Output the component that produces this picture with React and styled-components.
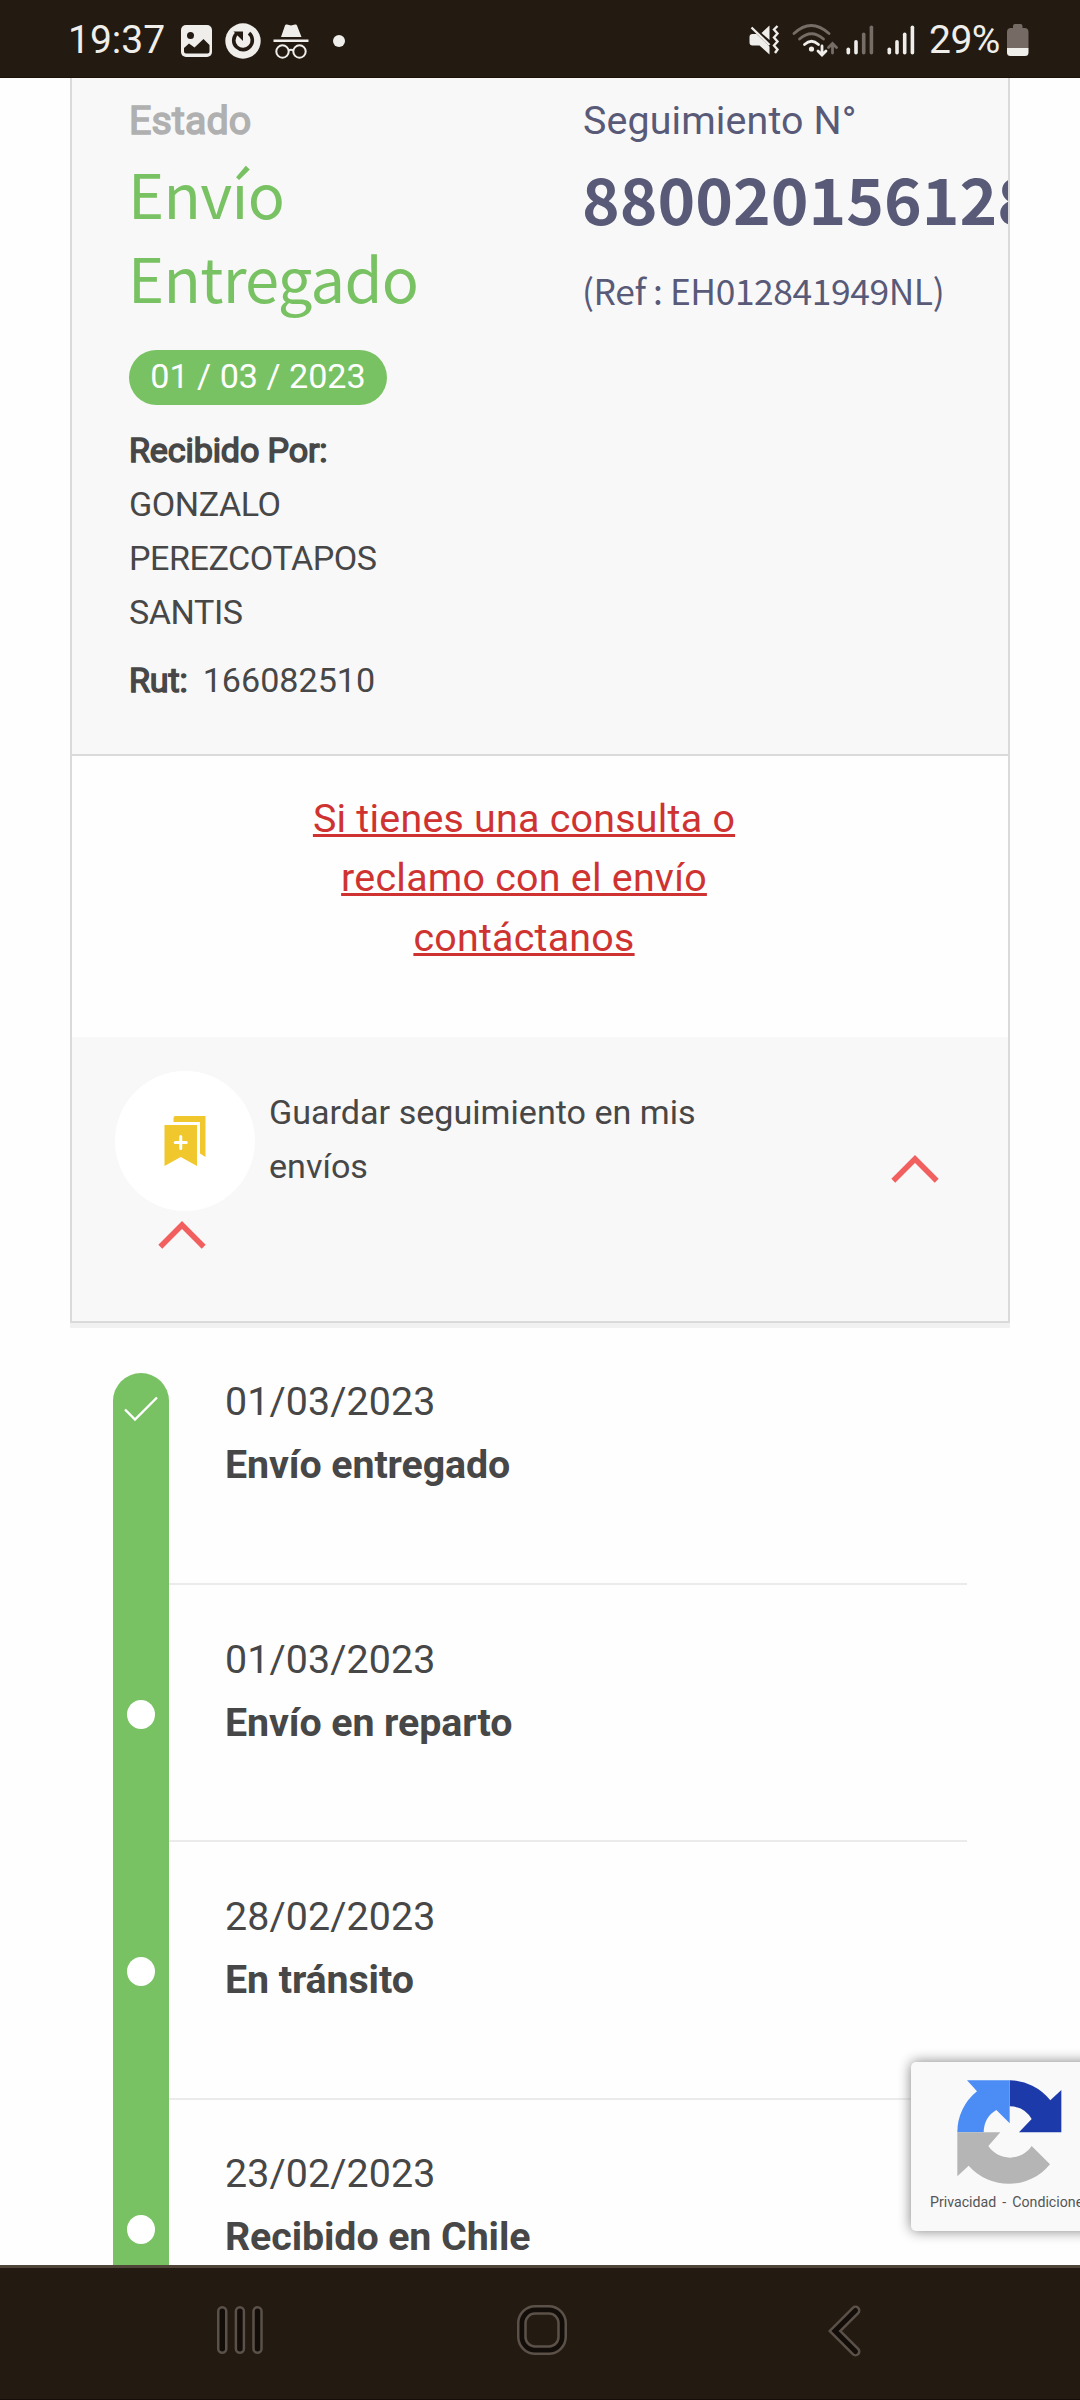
import React from 'react';
import styled, { createGlobalStyle } from 'styled-components';

const events = [
  { id: 1, date: '01/03/2023', title: 'Envío entregado', done: true },
  { id: 2, date: '01/03/2023', title: 'Envío en reparto' },
  { id: 3, date: '28/02/2023', title: 'En tránsito' },
  { id: 4, date: '23/02/2023', title: 'Recibido en Chile' },
];

const ImageIcon = () => (
  <svg width='31' height='32' viewBox='0 0 31 32'>
    <rect width='31' height='32' rx='5' fill='#efeeeb' />
    <circle cx='9.5' cy='10.5' r='3.5' fill='#231a12' />
    <path
      d='M3 23l5-4.5 5.5 4L22.5 14l6 6v6.5q0 2-2 2h-21.5q-2 0-2-2z'
      fill='#231a12'
    />
  </svg>
);

const UpdateIcon = () => (
  <svg width='36' height='36' viewBox='0 0 36 36'>
    <circle cx='18' cy='18' r='17.7' fill='#efeeeb' />
    <path
      d='M24 10.2a9.3 9.3 0 1 1-12.5 0.5'
      fill='none'
      stroke='#231a12'
      strokeWidth='3.6'
    />
    <path d='M8.5 8.5h9.5v9.5z' fill='#231a12' />
  </svg>
);

const IncognitoIcon = () => (
  <svg width='36' height='36' viewBox='0 0 36 36' fill='#efeeeb'>
    <path d='M8 14L12 2.5q.5-1.500 2-1l4 1 4-1q1.500-.5 2 1L28.500 14z' />
    <rect x='0.5' y='16.5' width='35' height='2.5' />
    <g fill='none' stroke='#efeeeb' strokeWidth='2'>
      <circle cx='9.5' cy='28.5' r='6.2' />
      <circle cx='26.5' cy='28.5' r='6.2' />
      <path d='M15.5 27.5q2.5-1.4 5 0' />
    </g>
  </svg>
);

const MuteIcon = () => (
  <svg width='31' height='30' viewBox='0 0 31 30'>
    <path
      d='M0.500 12q0-3 3-3h4l13 12.500v8l-10-9h-7q-3 0-3-3zM12.500 8l8-7.500v14.500z'
      fill='#efeeeb'
    />
    <path d='M2.500 2.500L20.500 20' stroke='#efeeeb' strokeWidth='2.4' />
    <path
      d='M28.500 1l-3.500 3.500 3.500 4-3.500 4 3.500 4-3.500 4 3.500 4-2.500 3.500'
      fill='none'
      stroke='#efeeeb'
      strokeWidth='2.4'
    />
  </svg>
);

const WifiIcon = () => (
  <svg width='46' height='34' viewBox='0 0 46 34' fill='none'>
    <g strokeWidth='2.8' strokeLinecap='round'>
      <path d='M2 10.5q17-16 35 0' stroke='#756d66' />
      <path d='M7.5 16q12-10.5 24 0' stroke='#756d66' />
      <path d='M12.5 21.5q7-6.5 14 0' stroke='#efeeeb' />
      <path d='M30 23v8.5m-4-3.5l4 4 4-4' stroke='#efeeeb' />
      <path d='M40.5 30v-9m-4 3.5l4-4 4 4' stroke='#756d66' />
    </g>
    <circle cx='19.5' cy='26' r='2.6' fill='#efeeeb' />
  </svg>
);

const SignalIcon = ({ bars }) => (
  <svg width='28' height='30' viewBox='0 0 28 30'>
    {[7, 14.5, 22, 29].map((height, index) => (
      <rect
        key={height}
        x={0.5 + index * 7.7}
        y={29.5 - height}
        width='3.6'
        height={height}
        rx='1.8'
        fill={index < bars ? '#efeeeb' : '#756d66'}
      />
    ))}
  </svg>
);

const BatteryIcon = () => (
  <svg width='22' height='32' viewBox='0 0 22 32'>
    <path
      d='M6 4V2q0-2 2-2h5.5q2 0 2 2v2h2q4 0 4 4v16H0V8q0-4 4-4z'
      fill='#756b64'
    />
    <path d='M0 24h21.5v4.5q0 3.5-3.5 3.5H3.5Q0 32 0 28.5z' fill='#efeeeb' />
  </svg>
);

const BookmarksIcon = () => (
  <svg width='42' height='51' viewBox='0 0 42 51' fill='#f0c72c'>
    <path d='M9.5 6V2q0-2 2-2H41.5v41l-5.5-3.5V6z' />
    <path d='M.5 9h32.5v41l-16.25-9L.5 50z' />
    <path
      d='M16.75 20.5v12M11.2 26.5h11.1'
      stroke='#fff'
      strokeWidth='3'
      strokeLinecap='round'
    />
  </svg>
);

const ChevronUp = () => (
  <svg width='48' height='28' viewBox='0 0 48 28' fill='none'>
    <path d='M2.3 25.7L24 4l21.7 21.7' stroke='#f25f5f' strokeWidth='5.5' />
  </svg>
);

const CheckIcon = () => (
  <svg width='34' height='26' viewBox='0 0 34 26' fill='none'>
    <path d='M1 13.5l10 10L33 1.5' stroke='#fff' strokeWidth='2.4' />
  </svg>
);

const CaptchaLogo = () => (
  <svg width='108' height='110' viewBox='285 175 324 330'>
    <path
      d='M449 182A156 156 0 0 1 571 242L604 211V338H477L515 298A78 78 0 0 0 449 260z'
      fill='#1c3aa9'
    />
    <path
      d='M449 182H321L351 215A156 156 0 0 0 292 338H371Q372 292 409 271L449 311z'
      fill='#4c8df5'
    />
    <path
      d='M292 338H421L385 379A78 78 0 0 0 515 379L570 434A160 160 0 0 1 326 438L292 470z'
      fill='#b5b5b5'
    />
  </svg>
);

const RecentsIcon = () => (
  <svg width='46' height='50' viewBox='0 0 46 50'>
    {[1.25, 18.9, 36.5].map((x) => (
      <rect
        key={x}
        x={x}
        y='2.25'
        width='8'
        height='45.5'
        rx='4'
        fill='#120d09'
        stroke='#5b5148'
        strokeWidth='2.5'
      />
    ))}
  </svg>
);

const HomeIcon = () => (
  <svg width='50' height='50' viewBox='0 0 50 50' stroke='#5b5148' strokeWidth='2.5'>
    <rect x='1.25' y='1.25' width='47.5' height='47.5' rx='17' fill='#120d09' />
    <rect x='8.5' y='8.5' width='33' height='33' rx='9.5' fill='#231a12' />
  </svg>
);

const BackIcon = () => (
  <svg width='34' height='52' viewBox='0 0 34 52' fill='none' strokeLinecap='round'>
    <path d='M27.5 5.5L7 26l20.5 20.5' stroke='#5b5148' strokeWidth='10' />
    <path d='M27.5 5.5L7 26l20.5 20.5' stroke='#120d09' strokeWidth='5' />
  </svg>
);

const StatusBar = () => (
  <StatusWrapper>
    <Time>19:37</Time>
    <LeftIcons>
      <ImageIcon />
      <UpdateIcon />
      <IncognitoIcon />
      <MoreDot />
    </LeftIcons>
    <RightIcons>
      <MuteIcon />
      <WifiIcon />
      <SignalGroup>
        <SignalIcon bars={2} />
        <SignalIcon bars={4} />
      </SignalGroup>
      <Percent>29%</Percent>
      <BatteryIcon />
    </RightIcons>
  </StatusWrapper>
);

const Summary = () => (
  <SummaryWrapper>
    <StatusColumn>
      <Label $muted>Estado</Label>
      <StatusTitle>Envío Entregado</StatusTitle>
      <DatePill>01 / 03 / 2023</DatePill>
      <Receiver>
        <dt>Recibido Por:</dt>
        <dd>GONZALO PEREZCOTAPOS SANTIS</dd>
      </Receiver>
      <Rut>
        <dt>Rut:</dt>
        <dd>166082510</dd>
      </Rut>
    </StatusColumn>
    <TrackingColumn>
      <Label>Seguimiento N°</Label>
      <TrackingNumber>880020156128</TrackingNumber>
      <Reference>(Ref : EH012841949NL)</Reference>
    </TrackingColumn>
  </SummaryWrapper>
);

const SavePanel = () => (
  <SaveWrapper>
    <SaveRow>
      <IconCircle>
        <BookmarksIcon />
      </IconCircle>
      <SaveText>Guardar seguimiento en mis envíos</SaveText>
      <RowToggle>
        <ChevronUp />
      </RowToggle>
    </SaveRow>
    <PanelToggle>
      <ChevronUp />
    </PanelToggle>
  </SaveWrapper>
);

const Timeline = () => (
  <TimelineList>
    {events.map((event) => (
      <TimelineItem key={event.id}>
        <Rail $first={event.done}>{event.done ? <CheckIcon /> : <Dot />}</Rail>
        <EventBody $first={event.done}>
          <EventDate>{event.date}</EventDate>
          <EventTitle>{event.title}</EventTitle>
        </EventBody>
      </TimelineItem>
    ))}
  </TimelineList>
);

const App = () => {
  return (
    <>
      <GlobalStyle />
      <Screen>
        <StatusBar />
        <Page>
          <Card>
            <Summary />
            <Contact>
              <a href='#contacto'>Si tienes una consulta o reclamo con el envío contáctanos</a>
            </Contact>
            <SavePanel />
          </Card>
          <Timeline />
          <CaptchaBadge>
            <CaptchaLogo />
            <CaptchaLinks>
              <span>Privacidad</span>
              <span>-</span>
              <span>Condiciones</span>
            </CaptchaLinks>
          </CaptchaBadge>
        </Page>
        <NavBar>
          <RecentsIcon />
          <HomeIcon />
          <BackIcon />
        </NavBar>
      </Screen>
    </>
  );
};

const GlobalStyle = createGlobalStyle`
  * {
    box-sizing: border-box;
    margin: 0;
    padding: 0;
  }

  body {
    font-family: Roboto, sans-serif;
    background: #fefefe;
    color: #474747;
  }

  svg {
    display: block;
    flex-shrink: 0;
  }
`;

const Screen = styled.div`
  width: 1080px;
  height: 2400px;
  display: flex;
  flex-direction: column;
  overflow: hidden;
`;

const StatusWrapper = styled.header`
  height: 78px;
  flex-shrink: 0;
  display: flex;
  align-items: center;
  padding: 2px 51px 0 68px;
  background: #231a12;
  border-bottom: 1px solid #1a110b;
  color: #efeeeb;
  font-size: 39px;
`;

const Time = styled.span`
  width: 113px;
`;

const LeftIcons = styled.div`
  display: flex;
  align-items: center;
  gap: 12.5px;
  padding-top: 2px;
`;

const MoreDot = styled.span`
  width: 12px;
  height: 12px;
  margin-left: 11px;
  border-radius: 50%;
  background: #efeeeb;
`;

const RightIcons = styled.div`
  display: flex;
  align-items: center;
  gap: 12px;
  margin-left: auto;
`;

const SignalGroup = styled.div`
  display: flex;
  gap: 13px;
  margin-left: -4px;
`;

const Percent = styled.span`
  width: 78px;
  margin: 0 -12px 0 2px;
  white-space: nowrap;
  letter-spacing: -0.5px;
`;

const Page = styled.main`
  position: relative;
  height: 2187px;
  flex-shrink: 0;
  overflow: hidden;
  background: #fefefe;
`;

const Card = styled.section`
  margin: 0 70px;
  border: 2px solid #dadada;
  border-top: none;
  box-shadow: 0 5px 0 #f1f1f1;
`;

const SummaryWrapper = styled.div`
  display: grid;
  grid-template-columns: 454px 1fr;
  padding: 14px 0 47px 57px;
  background: #f8f8f8;
  border-bottom: 2px solid #dadada;
  overflow: hidden;
`;

const StatusColumn = styled.div`
  width: 300px;
`;

const TrackingColumn = styled.div`
  min-width: 0;
  color: #585a78;
  white-space: nowrap;
`;

const Label = styled.p`
  font-size: 39.375px;
  line-height: 58px;
  letter-spacing: 0.12px;
  color: ${({ $muted }) => ($muted ? '#b0b0b0' : 'inherit')};
  -webkit-text-stroke: ${({ $muted }) => ($muted ? '1.6px #b0b0b0' : '0')};
`;

const StatusTitle = styled.h1`
  padding-top: 1px;
  margin: 0 0 -1px -1px;
  font-family: 'Noto Sans CJK SC', sans-serif;
  font-size: 61.4px;
  font-weight: 400;
  line-height: 84px;
  letter-spacing: -0.7px;
  color: #79c263;
`;

const DatePill = styled.p`
  width: 258px;
  height: 55px;
  margin-top: 32px;
  border-radius: 28px;
  background: #79c263;
  color: #fff;
  font-size: 34.125px;
  line-height: 53px;
  text-align: center;
  white-space: nowrap;
`;

const Receiver = styled.dl`
  margin-top: 18px;
  font-size: 34.125px;
  line-height: 54px;

  dt {
    letter-spacing: -0.15px;
    -webkit-text-stroke: 1.5px #474747;
  }

  dd {
    letter-spacing: -0.45px;
  }
`;

const Rut = styled(Receiver)`
  display: flex;
  gap: 15px;
  margin-top: 14px;

  dd {
    letter-spacing: 0;
  }
`;

const TrackingNumber = styled.p`
  margin: 5px 0 0 -1px;
  font-family: 'Noto Sans CJK SC', sans-serif;
  font-size: 64px;
  font-weight: 700;
  line-height: 84px;
`;

const Reference = styled.p`
  margin: 21px 0 0 -1px;
  font-family: 'Noto Sans CJK SC', sans-serif;
  font-size: 35.4px;
  font-weight: 400;
  line-height: 60px;
  letter-spacing: -0.42px;
`;

const Contact = styled.div`
  display: flex;
  justify-content: center;
  height: 281px;
  padding: 33px 32px 0 0;
  text-align: center;

  a {
    width: 460px;
    color: #cf3331;
    font-size: 39.375px;
    line-height: 59.4px;
    letter-spacing: 0.25px;
    text-decoration: underline 3px;
    text-underline-offset: 2px;
    text-decoration-skip-ink: none;
  }
`;

const SaveWrapper = styled.div`
  height: 284px;
  padding: 34px 69px 0 43px;
  background: #f8f8f8;
`;

const SaveRow = styled.div`
  display: flex;
  align-items: flex-start;
`;

const IconCircle = styled.div`
  width: 140px;
  height: 140px;
  display: flex;
  align-items: center;
  justify-content: center;
  border-radius: 50%;
  background: #fff;
`;

const SaveText = styled.p`
  width: 460px;
  margin: 14px 0 0 14px;
  font-size: 34.125px;
  line-height: 54px;
`;

const RowToggle = styled.div`
  margin: 84px 0 0 auto;
`;

const PanelToggle = styled.div`
  margin: 10px 0 0 43px;
`;

const TimelineList = styled.ul`
  margin: 50px 113px 0;
  list-style: none;
`;

const TimelineItem = styled.li`
  display: grid;
  grid-template-columns: 56px 798px;
`;

const Rail = styled.div`
  display: flex;
  flex-direction: column;
  align-items: center;
  padding-top: ${({ $first }) => ($first ? '23px' : '115px')};
  border-radius: ${({ $first }) => ($first ? '28px 28px 0 0' : '0')};
  background: #79c263;
`;

const Dot = styled.span`
  width: 28px;
  height: 29px;
  border-radius: 50%;
  background: #fff;
`;

const EventBody = styled.div`
  padding: ${({ $first }) => ($first ? '1px 0 83px' : '46.6px 0 82.8px')};
  padding-left: 56px;
  border-bottom: 2px solid #ebebeb;
  font-size: 39.375px;
`;

const EventDate = styled.p`
  line-height: 56px;
  letter-spacing: 0.1px;
`;

const EventTitle = styled.h2`
  font-size: inherit;
  font-weight: 700;
  line-height: 70px;
  letter-spacing: -0.1px;
`;

const CaptchaBadge = styled.aside`
  position: absolute;
  top: 1984px;
  left: 911px;
  width: 256px;
  height: 169px;
  padding: 16px 0 0 44px;
  border-radius: 5px;
  background: #f9f9f9;
  box-shadow: 0 0 13px #808080;
`;

const CaptchaLinks = styled.div`
  display: flex;
  gap: 6px;
  margin: 6px 0 0 -25px;
  font-size: 14.2px;
  line-height: 16px;
  color: #555;
`;

const NavBar = styled.nav`
  height: 135px;
  flex-shrink: 0;
  display: grid;
  grid-template-columns: 300px 311px 34px;
  padding: 37px 0 0 217px;
  background: #231a12;
  border-top: 3px solid #4f4438;
  border-bottom: 1px solid #170c09;
`;

export default App;
